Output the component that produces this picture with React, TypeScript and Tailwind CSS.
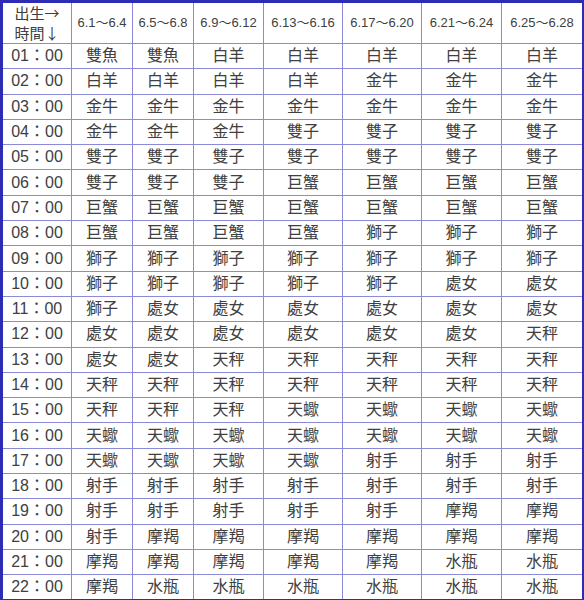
const headers = ["6.1～6.4", "6.5～6.8", "6.9～6.12", "6.13～6.16", "6.17～6.20", "6.21～6.24", "6.25～6.28"]

const widths = ["w-[70px]", "w-[61px]", "w-[61px]", "w-[70px]", "w-[79px]", "w-[79px]", "w-[80px]", "w-[82px]"]

const rows: string[][] = [
  ["雙魚", "雙魚", "白羊", "白羊", "白羊", "白羊", "白羊"],
  ["白羊", "白羊", "白羊", "白羊", "金牛", "金牛", "金牛"],
  ["金牛", "金牛", "金牛", "金牛", "金牛", "金牛", "金牛"],
  ["金牛", "金牛", "金牛", "雙子", "雙子", "雙子", "雙子"],
  ["雙子", "雙子", "雙子", "雙子", "雙子", "雙子", "雙子"],
  ["雙子", "雙子", "雙子", "巨蟹", "巨蟹", "巨蟹", "巨蟹"],
  ["巨蟹", "巨蟹", "巨蟹", "巨蟹", "巨蟹", "巨蟹", "巨蟹"],
  ["巨蟹", "巨蟹", "巨蟹", "巨蟹", "獅子", "獅子", "獅子"],
  ["獅子", "獅子", "獅子", "獅子", "獅子", "獅子", "獅子"],
  ["獅子", "獅子", "獅子", "獅子", "獅子", "處女", "處女"],
  ["獅子", "處女", "處女", "處女", "處女", "處女", "處女"],
  ["處女", "處女", "處女", "處女", "處女", "處女", "天秤"],
  ["處女", "處女", "天秤", "天秤", "天秤", "天秤", "天秤"],
  ["天秤", "天秤", "天秤", "天秤", "天秤", "天秤", "天秤"],
  ["天秤", "天秤", "天秤", "天蠍", "天蠍", "天蠍", "天蠍"],
  ["天蠍", "天蠍", "天蠍", "天蠍", "天蠍", "天蠍", "天蠍"],
  ["天蠍", "天蠍", "天蠍", "天蠍", "射手", "射手", "射手"],
  ["射手", "射手", "射手", "射手", "射手", "射手", "射手"],
  ["射手", "射手", "射手", "射手", "射手", "摩羯", "摩羯"],
  ["射手", "摩羯", "摩羯", "摩羯", "摩羯", "摩羯", "摩羯"],
  ["摩羯", "摩羯", "摩羯", "摩羯", "摩羯", "水瓶", "水瓶"],
  ["摩羯", "水瓶", "水瓶", "水瓶", "水瓶", "水瓶", "水瓶"],
]

const cell = "border border-[#8a8ad8] text-center p-0"

export default function App() {
  return (
    <div className="w-[584px] h-[600px] bg-white overflow-hidden font-['Liberation_Sans','Noto_Sans_CJK_TC',sans-serif] text-[#404040]">
      <table className="table-fixed border-collapse border-[3px] border-[#2c2cb4] w-[583px]">
        <thead>
          <tr className="h-[42px]">
            <th className={`${cell} ${widths[0]} font-normal text-[15px] leading-[20px] font-['Noto_Sans_CJK_TC',sans-serif]`}>
              <div>出生→</div>
              <div>時間↓</div>
            </th>
            {headers.map((h, i) => (
              <th key={h} className={`${cell} ${widths[i + 1]} font-normal text-[13px]`}>
                {h}
              </th>
            ))}
          </tr>
        </thead>
        <tbody>
          {rows.map((r, i) => (
            <tr key={i} className="h-[25.3px]">
              <td className={`${cell} text-[16px] leading-none`}>{String(i + 1).padStart(2, "0")}：00</td>
              {r.map((s, j) => (
                <td key={j} className={`${cell} text-[16px] leading-none`}>
                  {s}
                </td>
              ))}
            </tr>
          ))}
        </tbody>
      </table>
    </div>
  )
}
